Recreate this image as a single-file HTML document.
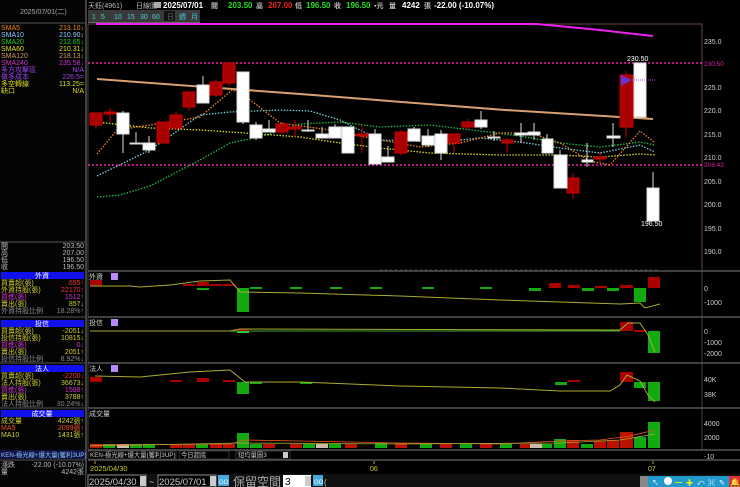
<!DOCTYPE html>
<html><head><meta charset="utf-8"><style>
html,body{margin:0;padding:0;background:#000;width:740px;height:487px;overflow:hidden}
svg{display:block}
text{font-family:"Liberation Sans","Noto Sans CJK TC",sans-serif;font-size:7px}
.m{font-family:"Liberation Mono","Noto Sans CJK TC",monospace;font-size:6.5px}
</style></head><body>
<svg width="740" height="487" viewBox="0 0 740 487" xmlns="http://www.w3.org/2000/svg">
<rect width="740" height="487" fill="#000"/>
<rect x="0" y="0" width="85" height="487" fill="#050505"/>
<line x1="86" y1="0" x2="86" y2="487" stroke="#555" stroke-width="1.5"/>
<line x1="0" y1="23" x2="85" y2="23" stroke="#555"/>
<text x="20" y="14" fill="#aaa">2025/07/01(二)</text>
<g class="m">
<text x="1" y="30" fill="#e82">SMA5</text><text x="84" y="30" fill="#e82" text-anchor="end">213.10↓</text>
<text x="1" y="37" fill="#8cf">SMA10</text><text x="84" y="37" fill="#8cf" text-anchor="end">210.90↓</text>
<text x="1" y="44" fill="#2c2">SMA20</text><text x="84" y="44" fill="#2c2" text-anchor="end">212.65↓</text>
<text x="1" y="51" fill="#dd2">SMA60</text><text x="84" y="51" fill="#dd2" text-anchor="end">210.31↓</text>
<text x="1" y="58" fill="#c96">SMA120</text><text x="84" y="58" fill="#c96" text-anchor="end">218.13↓</text>
<text x="1" y="65" fill="#c3c">SMA240</text><text x="84" y="65" fill="#c3c" text-anchor="end">235.58↓</text>
<text x="1" y="72" fill="#94e">多方攻擊區</text><text x="84" y="72" fill="#94e" text-anchor="end">N/A</text>
<text x="1" y="79" fill="#94e">做多成本</text><text x="84" y="79" fill="#94e" text-anchor="end">226.5=</text>
<text x="1" y="86" fill="#dd2">多空轉線</text><text x="84" y="86" fill="#dd2" text-anchor="end">113.25=</text>
<text x="1" y="93" fill="#dd2">缺口</text><text x="84" y="93" fill="#dd2" text-anchor="end">N/A</text>
</g>
<line x1="0" y1="242" x2="85" y2="242" stroke="#555"/>
<g class="m" fill="#bbb">
<text x="1" y="248">開</text><text x="84" y="248" text-anchor="end">203.50</text>
<text x="1" y="255">高</text><text x="84" y="255" text-anchor="end">207.00</text>
<text x="1" y="262">低</text><text x="84" y="262" text-anchor="end">196.50</text>
<text x="1" y="269">收</text><text x="84" y="269" text-anchor="end">196.50</text>
</g>
<rect x="1" y="272" width="83" height="7" fill="#11e"/><text x="42" y="278" fill="#fff" text-anchor="middle">外資</text>
<g class="m">
<text x="1" y="285" fill="#cc3">買賣超(張)</text><text x="84" y="285" fill="#e33" text-anchor="end">655↑</text>
<text x="1" y="292" fill="#cc3">外資持股(張)</text><text x="84" y="292" fill="#e33" text-anchor="end">22170↑</text>
<text x="1" y="299" fill="#c3c">買進(張)</text><text x="84" y="299" fill="#c3c" text-anchor="end">1512↑</text>
<text x="1" y="306" fill="#cc3">賣出(張)</text><text x="84" y="306" fill="#cc3" text-anchor="end">857↓</text>
<text x="1" y="313" fill="#888">外資持股比例</text><text x="84" y="313" fill="#888" text-anchor="end">18.28%↑</text>
</g>
<line x1="0" y1="317" x2="85" y2="317" stroke="#555"/>
<rect x="1" y="320" width="83" height="7" fill="#11e"/><text x="42" y="326" fill="#fff" text-anchor="middle">投信</text>
<g class="m">
<text x="1" y="333" fill="#cc3">買賣超(張)</text><text x="84" y="333" fill="#cc3" text-anchor="end">-2051↓</text>
<text x="1" y="340" fill="#cc3">投信持股(張)</text><text x="84" y="340" fill="#cc3" text-anchor="end">10815↓</text>
<text x="1" y="347" fill="#c3c">買進(張)</text><text x="84" y="347" fill="#c3c" text-anchor="end">0↓</text>
<text x="1" y="354" fill="#cc3">賣出(張)</text><text x="84" y="354" fill="#cc3" text-anchor="end">2051↑</text>
<text x="1" y="361" fill="#888">投信持股比例</text><text x="84" y="361" fill="#888" text-anchor="end">8.92%↓</text>
</g>
<line x1="0" y1="363" x2="85" y2="363" stroke="#555"/>
<rect x="1" y="365" width="83" height="7" fill="#11e"/><text x="42" y="371" fill="#fff" text-anchor="middle">法人</text>
<g class="m">
<text x="1" y="378" fill="#cc3">買賣超(張)</text><text x="84" y="378" fill="#e33" text-anchor="end">-2200↓</text>
<text x="1" y="385" fill="#cc3">法人持股(張)</text><text x="84" y="385" fill="#cc3" text-anchor="end">36673↓</text>
<text x="1" y="392" fill="#c3c">買進(張)</text><text x="84" y="392" fill="#c3c" text-anchor="end">1588↑</text>
<text x="1" y="399" fill="#cc3">賣出(張)</text><text x="84" y="399" fill="#cc3" text-anchor="end">3788↑</text>
<text x="1" y="406" fill="#888">法人持股比例</text><text x="84" y="406" fill="#888" text-anchor="end">30.24%↓</text>
</g>
<line x1="0" y1="408" x2="85" y2="408" stroke="#555"/>
<rect x="1" y="410" width="83" height="7" fill="#11e"/><text x="42" y="416" fill="#fff" text-anchor="middle">成交量</text>
<g class="m">
<text x="1" y="423" fill="#cc3">成交量</text><text x="84" y="423" fill="#cc3" text-anchor="end">4242張↑</text>
<text x="1" y="430" fill="#e52">MA5</text><text x="84" y="430" fill="#e52" text-anchor="end">2099張↑</text>
<text x="1" y="437" fill="#cc3">MA10</text><text x="84" y="437" fill="#cc3" text-anchor="end">1431張↑</text>
</g>
<rect x="0" y="450" width="85" height="9" fill="#114"/>
<text x="1" y="457" fill="#8cf" style="font-size:6.3px">KEN-極光線+爆大量(獲利3UP)</text>
<line x1="0" y1="460" x2="85" y2="460" stroke="#555"/>
<g class="m">
<text x="1" y="467" fill="#bbb">漲跌</text><text x="84" y="467" fill="#bbb" text-anchor="end">-22.00 (-10.07%)</text>
<text x="1" y="474" fill="#bbb">量</text><text x="84" y="474" fill="#bbb" text-anchor="end">4242張</text>
</g>

<text x="88" y="8" fill="#bbb">天鈺(4961)</text>
<text x="136" y="8" fill="#bbb">日線圖</text>
<rect x="154" y="2" width="7" height="6" fill="#aaa"/>
<g style="font-weight:bold;font-size:8px">
<text x="163" y="8" fill="#fff" style="font-size:8px">2025/07/01</text>
<text x="211" y="8" fill="#bbb">開</text><text x="228" y="8" fill="#2d2" style="font-size:8px">203.50</text>
<text x="256" y="8" fill="#bbb">高</text><text x="268" y="8" fill="#e22" style="font-size:8px">207.00</text>
<text x="295" y="8" fill="#bbb">低</text><text x="306" y="8" fill="#2d2" style="font-size:8px">196.50</text>
<text x="334" y="8" fill="#bbb">收</text><text x="346" y="8" fill="#2d2" style="font-size:8px">196.50</text>
<text x="374" y="8" fill="#bbb">▪元</text>
<text x="389" y="8" fill="#bbb">量</text><text x="402" y="8" fill="#fff" style="font-size:8px">4242</text>
<text x="424" y="8" fill="#bbb">張</text>
<text x="434" y="8" fill="#fff" style="font-size:8px">-22.00 (-10.07%)</text>
</g>
<rect x="88" y="10" width="112" height="12" fill="#3a3a3a"/>
<g fill="#4cd" style="font-size:7.5px">
<text x="92" y="19">1</text><text x="101" y="19">5</text><text x="114" y="19">10</text><text x="127" y="19">15</text><text x="140" y="19">30</text><text x="152" y="19">60</text>
</g>
<rect x="164" y="11" width="11" height="10" fill="#111"/>
<text x="167" y="19" fill="#666">日</text><text x="179" y="19" fill="#4cd">週</text><text x="191" y="19" fill="#4cd">月</text>
<line x1="88" y1="22.5" x2="200" y2="22.5" stroke="#666"/>

<line x1="88" y1="24" x2="88" y2="450" stroke="#444"/>
<polyline points="88,24 702,24 702,270" fill="none" stroke="#644" stroke-width="1"/>
<line x1="702" y1="270" x2="702" y2="450" stroke="#444"/>
<polyline points="96,24 537,24 600,30 653,36" fill="none" stroke="#e2e" stroke-width="2"/>
<line x1="88" y1="63" x2="702" y2="63" stroke="#e2a" stroke-width="1.5" stroke-dasharray="2,2"/>
<line x1="88" y1="165" x2="702" y2="165" stroke="#e2a" stroke-width="1.5" stroke-dasharray="2,2"/>
<polyline points="97,79 300,94 505,110 653,119" fill="none" stroke="#d9a070" stroke-width="2"/>
<polyline points="97,176 150,150 200,115 230,112 280,110 310,111 340,120 380,140 440,142 480,138 520,142 560,148 600,153 640,145 655,152" fill="none" stroke="#7cd" stroke-width="1.3" stroke-dasharray="1.5,1.5"/>
<polyline points="97,197 120,195 150,186 200,160 230,143 260,137 300,124 340,122 380,127 430,125 480,131 520,136 560,143 600,147 640,142 655,145" fill="none" stroke="#2b4" stroke-width="1.3" stroke-dasharray="1.5,1.5"/>
<polyline points="97,122 150,128 200,130 260,134 300,137 340,143 380,148 430,153 500,155 560,155 600,157 640,154 655,155" fill="none" stroke="#dd2" stroke-width="1.3" stroke-dasharray="1.5,1.5"/>
<polyline points="97,154 117,130 150,125 200,117 232,90 240,92 280,123 330,130 380,140 420,147 460,143 500,133 530,133 560,143 590,161 610,165 625,148 640,131 655,143" fill="none" stroke="#e82" stroke-width="1.3" stroke-dasharray="1.5,1.5"/>

<g stroke-width="1">
<g fill="#a00" stroke="#c00">
<line x1="96" y1="113" x2="96" y2="129"/><rect x="90" y="113" width="12" height="12"/>
<line x1="110" y1="108" x2="110" y2="122"/><rect x="104" y="112" width="12" height="2"/>
<rect x="157" y="122" width="12" height="21"/>
<line x1="176" y1="112" x2="176" y2="130"/><rect x="170" y="115" width="12" height="13"/>
<line x1="189" y1="92" x2="189" y2="111"/><rect x="183" y="92" width="12" height="15"/>
<line x1="216" y1="79" x2="216" y2="97"/><rect x="210" y="82" width="12" height="13"/>
<line x1="229" y1="63" x2="229" y2="86"/><rect x="223" y="63" width="12" height="20"/>
<line x1="282" y1="122" x2="282" y2="134"/><rect x="276" y="124" width="12" height="8"/>
<line x1="295" y1="120" x2="295" y2="137"/><rect x="289" y="127" width="12" height="2"/>
<line x1="362" y1="125" x2="362" y2="153"/><rect x="356" y="134" width="12" height="2"/>
<line x1="401" y1="130" x2="401" y2="155"/><rect x="395" y="132" width="12" height="21"/>
<line x1="454" y1="134" x2="454" y2="153"/><rect x="448" y="134" width="12" height="9"/>
<line x1="468" y1="119" x2="468" y2="130"/><rect x="462" y="122" width="12" height="5"/>
<line x1="507" y1="138" x2="507" y2="153"/><rect x="502" y="140" width="11" height="3"/>
<line x1="573" y1="173" x2="573" y2="199"/><rect x="567" y="178" width="12" height="15"/>
<line x1="600" y1="152" x2="600" y2="163"/><rect x="594" y="157" width="12" height="2"/>
<line x1="626" y1="71" x2="626" y2="137"/><rect x="620" y="75" width="13" height="52"/>
</g>
<g fill="#fff" stroke="#ddd">
<line x1="123" y1="111" x2="123" y2="153"/><rect x="117" y="113" width="12" height="21"/>
<line x1="136" y1="132" x2="136" y2="143"/><rect x="130" y="143" width="12" height="1"/>
<line x1="149" y1="136" x2="149" y2="153"/><rect x="143" y="143" width="12" height="7"/>
<line x1="203" y1="76" x2="203" y2="103"/><rect x="197" y="85" width="12" height="18"/>
<line x1="243" y1="72" x2="243" y2="124"/><rect x="237" y="72" width="12" height="50"/>
<line x1="256" y1="122" x2="256" y2="140"/><rect x="250" y="125" width="12" height="13"/>
<line x1="269" y1="120" x2="269" y2="132"/><rect x="263" y="129" width="12" height="3"/>
<line x1="308" y1="120" x2="308" y2="132"/><rect x="302" y="130" width="12" height="1"/>
<line x1="322" y1="127" x2="322" y2="138"/><rect x="316" y="134" width="12" height="4"/>
<line x1="335" y1="124" x2="335" y2="138"/><rect x="329" y="127" width="12" height="11"/>
<line x1="348" y1="127" x2="348" y2="153"/><rect x="342" y="127" width="12" height="26"/>
<line x1="375" y1="129" x2="375" y2="164"/><rect x="369" y="134" width="12" height="30"/>
<line x1="388" y1="146" x2="388" y2="162"/><rect x="382" y="157" width="12" height="5"/>
<line x1="414" y1="127" x2="414" y2="141"/><rect x="408" y="129" width="12" height="12"/>
<line x1="428" y1="129" x2="428" y2="147"/><rect x="422" y="136" width="12" height="9"/>
<line x1="441" y1="130" x2="441" y2="160"/><rect x="435" y="134" width="12" height="19"/>
<line x1="481" y1="111" x2="481" y2="129"/><rect x="475" y="120" width="12" height="7"/>
<line x1="494" y1="131" x2="494" y2="141"/><rect x="488" y="137" width="12" height="1"/>
<line x1="521" y1="123" x2="521" y2="143"/><rect x="515" y="133" width="12" height="2"/>
<line x1="534" y1="123" x2="534" y2="140"/><rect x="528" y="132" width="12" height="3"/>
<line x1="547" y1="134" x2="547" y2="153"/><rect x="542" y="139" width="11" height="14"/>
<line x1="560" y1="150" x2="560" y2="188"/><rect x="554" y="155" width="13" height="33"/>
<line x1="587" y1="143" x2="587" y2="167"/><rect x="582" y="160" width="11" height="2"/>
<line x1="613" y1="123" x2="613" y2="147"/><rect x="607" y="136" width="13" height="2"/>
<rect x="634" y="63" width="12" height="54"/>
<line x1="653" y1="172" x2="653" y2="188"/><rect x="647" y="188" width="12" height="33"/>
</g>
</g>
<polygon points="621,75 621,86 632,80" fill="#63c"/>
<line x1="632" y1="80" x2="655" y2="80" stroke="#a4f" stroke-dasharray="1,1"/>
<text x="627" y="61" fill="#fff">230.50</text>
<text x="641" y="226" fill="#fff">196.50</text>
<g fill="#ccc" style="font-size:7.5px">
<text x="704" y="44">235.0</text><text x="704" y="90">225.0</text><text x="704" y="113">220.0</text><text x="704" y="137">215.0</text><text x="704" y="160">210.0</text><text x="704" y="184">205.0</text><text x="704" y="207">200.0</text><text x="704" y="231">195.0</text><text x="704" y="254">190.0</text>
</g>
<text x="704" y="66" fill="#d2a" style="font-size:6.5px">230.50</text>
<text x="704" y="167" fill="#d2a" style="font-size:6.5px">208.42</text>
<line x1="380" y1="270" x2="660" y2="270" stroke="#a88" stroke-dasharray="2,3" opacity=".6"/>

<g stroke="#555" stroke-width="1.5">
<line x1="88" y1="271" x2="740" y2="271"/><line x1="88" y1="317" x2="740" y2="317"/><line x1="88" y1="363" x2="740" y2="363"/><line x1="88" y1="408" x2="740" y2="408"/><line x1="88" y1="450" x2="740" y2="450"/><line x1="88" y1="460" x2="740" y2="460"/>
</g>
<text x="89" y="279" fill="#ccc">外資</text><rect x="111" y="273" width="7" height="7" fill="#b8f"/>
<g fill="#a00"><rect x="90" y="280" width="12" height="6"/><rect x="183" y="284" width="12" height="2"/><rect x="197" y="282" width="12" height="4"/><rect x="210" y="284" width="12" height="2"/><rect x="223" y="284" width="12" height="2"/><rect x="549" y="283" width="12" height="5"/><rect x="568" y="285" width="12" height="3"/><rect x="595" y="286" width="12" height="2"/><rect x="620" y="285" width="13" height="3"/><rect x="648" y="277" width="12" height="11"/></g>
<g fill="#1a1"><rect x="237" y="288" width="12" height="24"/><rect x="197" y="288" width="12" height="2"/><rect x="250" y="287" width="12" height="2"/><rect x="290" y="287" width="12" height="2"/><rect x="330" y="287" width="12" height="2"/><rect x="370" y="287" width="12" height="2"/><rect x="422" y="287" width="12" height="2"/><rect x="480" y="287" width="12" height="2"/><rect x="529" y="288" width="12" height="3"/><rect x="582" y="288" width="12" height="3"/><rect x="607" y="288" width="12" height="3"/><rect x="634" y="288" width="12" height="14"/></g>
<polyline points="90,286 130,286 140,287 170,285 200,281 230,280 240,292 300,293 400,296 500,300 560,302 620,304 640,303 645,308 660,304" fill="none" stroke="#aa3" stroke-width="1"/>
<g fill="#ccc" style="font-size:7.5px"><text x="704" y="291">0</text><text x="704" y="305">-1000</text></g>
<text x="89" y="325" fill="#ccc">投信</text><rect x="111" y="319" width="7" height="7" fill="#b8f"/>
<line x1="90" y1="331" x2="620" y2="331" stroke="#3a3" stroke-width="1"/>
<g fill="#a00"><rect x="237" y="329" width="12" height="2"/><rect x="620" y="322" width="13" height="9"/><rect x="634" y="330" width="12" height="2"/></g>
<rect x="237" y="331" width="12" height="2" fill="#2c2"/>
<rect x="648" y="331" width="12" height="22" fill="#1a1"/>
<polyline points="90,331 230,331 240,329 620,330 628,323 640,323 648,335 655,352" fill="none" stroke="#aa3"/>
<g fill="#ccc" style="font-size:7.5px"><text x="704" y="334">0</text><text x="704" y="345">-1000</text><text x="704" y="356">-2000</text></g>
<text x="89" y="371" fill="#ccc">法人</text><rect x="111" y="365" width="7" height="7" fill="#b8f"/>
<g fill="#a00"><rect x="90" y="377" width="12" height="5"/><rect x="170" y="380" width="12" height="2"/><rect x="197" y="378" width="12" height="4"/><rect x="223" y="380" width="12" height="2"/><rect x="568" y="380" width="12" height="2"/><rect x="620" y="372" width="13" height="10"/></g>
<g fill="#1a1"><rect x="237" y="382" width="12" height="12"/><rect x="250" y="382" width="12" height="2"/><rect x="300" y="382" width="12" height="2"/><rect x="555" y="382" width="12" height="3"/><rect x="634" y="382" width="12" height="6"/><rect x="648" y="382" width="12" height="19"/></g>
<polyline points="95,376 140,377 190,372 230,370 245,382 300,382 400,386 500,388 560,391 610,391 620,385 627,375 640,381 648,395 655,402" fill="none" stroke="#aa3"/>
<g fill="#ccc" style="font-size:7.5px"><text x="704" y="382">40K</text><text x="704" y="397">38K</text></g>
<text x="89" y="416" fill="#ccc">成交量</text>
<g fill="#1a1"><rect x="103" y="444" width="12" height="4"/><rect x="130" y="444" width="12" height="4"/><rect x="143" y="444" width="12" height="4"/><rect x="196" y="444" width="12" height="4"/><rect x="237" y="433" width="12" height="15"/><rect x="250" y="444" width="12" height="4"/><rect x="303" y="444" width="12" height="4"/><rect x="329" y="444" width="12" height="4"/><rect x="375" y="443" width="12" height="5"/><rect x="420" y="444" width="12" height="4"/><rect x="460" y="444" width="12" height="4"/><rect x="500" y="444" width="12" height="4"/><rect x="540" y="444" width="12" height="4"/><rect x="554" y="439" width="12" height="9"/><rect x="581" y="444" width="12" height="4"/><rect x="634" y="437" width="12" height="11"/><rect x="648" y="422" width="12" height="26"/></g>
<g fill="#b10"><rect x="90" y="444" width="12" height="4"/><rect x="170" y="444" width="12" height="4"/><rect x="183" y="444" width="12" height="4"/><rect x="210" y="444" width="12" height="4"/><rect x="223" y="444" width="12" height="4"/><rect x="263" y="444" width="12" height="4"/><rect x="290" y="444" width="12" height="4"/><rect x="345" y="444" width="12" height="4"/><rect x="395" y="443" width="12" height="5"/><rect x="440" y="444" width="12" height="4"/><rect x="480" y="444" width="12" height="4"/><rect x="520" y="444" width="12" height="4"/><rect x="567" y="440" width="12" height="8"/><rect x="594" y="441" width="12" height="7"/><rect x="607" y="440" width="12" height="8"/><rect x="620" y="432" width="13" height="16"/></g>
<g fill="#cba"><rect x="117" y="444" width="12" height="4"/><rect x="316" y="444" width="12" height="4"/><rect x="530" y="444" width="12" height="4"/></g>
<polyline points="90,445 230,444 245,440 300,441 400,443 500,444 560,441 600,440 630,436 655,430" fill="none" stroke="#e52" stroke-width=".8"/>
<polyline points="90,446 240,443 400,444 560,443 620,440 655,434" fill="none" stroke="#aa3" stroke-width=".8"/>
<g fill="#ccc" style="font-size:7.5px"><text x="704" y="426">4000</text><text x="704" y="440">2000</text><text x="704" y="459">-10</text></g>
<rect x="88" y="451" width="88" height="8" fill="#000" stroke="#666" stroke-width=".5"/>
<text x="90" y="457" fill="#ccc" style="font-size:6.3px">KEN-極光線+爆大量(獲利3UP)</text>
<rect x="179" y="451" width="50" height="8" fill="#000" stroke="#666" stroke-width=".5"/>
<text x="181" y="457" fill="#ccc" style="font-size:6.3px">今日超底</text>
<rect x="236" y="451" width="54" height="8" fill="#000" stroke="#666" stroke-width=".5"/>
<text x="238" y="457" fill="#ccc" style="font-size:6.3px">短均量圖3</text>
<rect x="283" y="452" width="5" height="6" fill="#ccc"/>
<line x1="95" y1="461" x2="95" y2="464" stroke="#aa3"/>
<text x="90" y="471" fill="#cc3" style="font-size:7.5px">2025/04/30</text>
<line x1="374" y1="461" x2="374" y2="464" stroke="#aa3"/><text x="370" y="471" fill="#cc3">06</text>
<line x1="653" y1="461" x2="653" y2="464" stroke="#aa3"/><text x="648" y="471" fill="#cc3">07</text>
<rect x="86" y="474" width="654" height="13" fill="#111"/>
<rect x="88" y="475" width="58" height="12" fill="#000" stroke="#888"/>
<text x="89" y="485" fill="#ccc" style="font-size:9.5px">2025/04/30</text>
<rect x="140" y="476" width="6" height="10" fill="#ccc"/>
<text x="149" y="485" fill="#ccc" style="font-size:9px">~</text>
<rect x="158" y="475" width="58" height="12" fill="#000" stroke="#888"/>
<text x="159" y="485" fill="#ccc" style="font-size:9.5px">2025/07/01</text>
<rect x="210" y="476" width="6" height="10" fill="#ccc"/>
<rect x="218" y="475" width="11" height="11" fill="#4ad"/><text x="219" y="484" fill="#fff" style="font-size:6px">GO</text>
<text x="233" y="486" fill="#aaa" style="font-size:12px">保留空間</text>
<rect x="283" y="475" width="28" height="12" fill="#fff"/>
<text x="285" y="485" fill="#000" style="font-size:10px">3</text>
<rect x="305" y="476" width="6" height="10" fill="#ccc"/>
<rect x="313" y="475" width="10" height="11" fill="#4ad"/><text x="314" y="484" fill="#fff" style="font-size:6px">GO</text>
<text x="324" y="485" fill="#ccc" style="font-size:8px">(</text>
<rect x="641" y="476" width="99" height="11" fill="#29c"/>
<rect x="640" y="476" width="8" height="11" fill="#888"/>
<g fill="#fff" style="font-size:8px">
<text x="652" y="485">↖</text><circle cx="668" cy="481" r="4" fill="#fff"/><text x="675" y="485" fill="#ff0">━</text><text x="686" y="485" fill="#ff0">✚</text><text x="697" y="485">⤺</text><text x="708" y="485">⌘</text><text x="719" y="485">✎</text>
</g>
<rect x="729" y="476" width="11" height="11" fill="#d33"/><text x="730" y="485" fill="#fc0" style="font-size:8px">🔔</text>
</svg>
</body></html>
